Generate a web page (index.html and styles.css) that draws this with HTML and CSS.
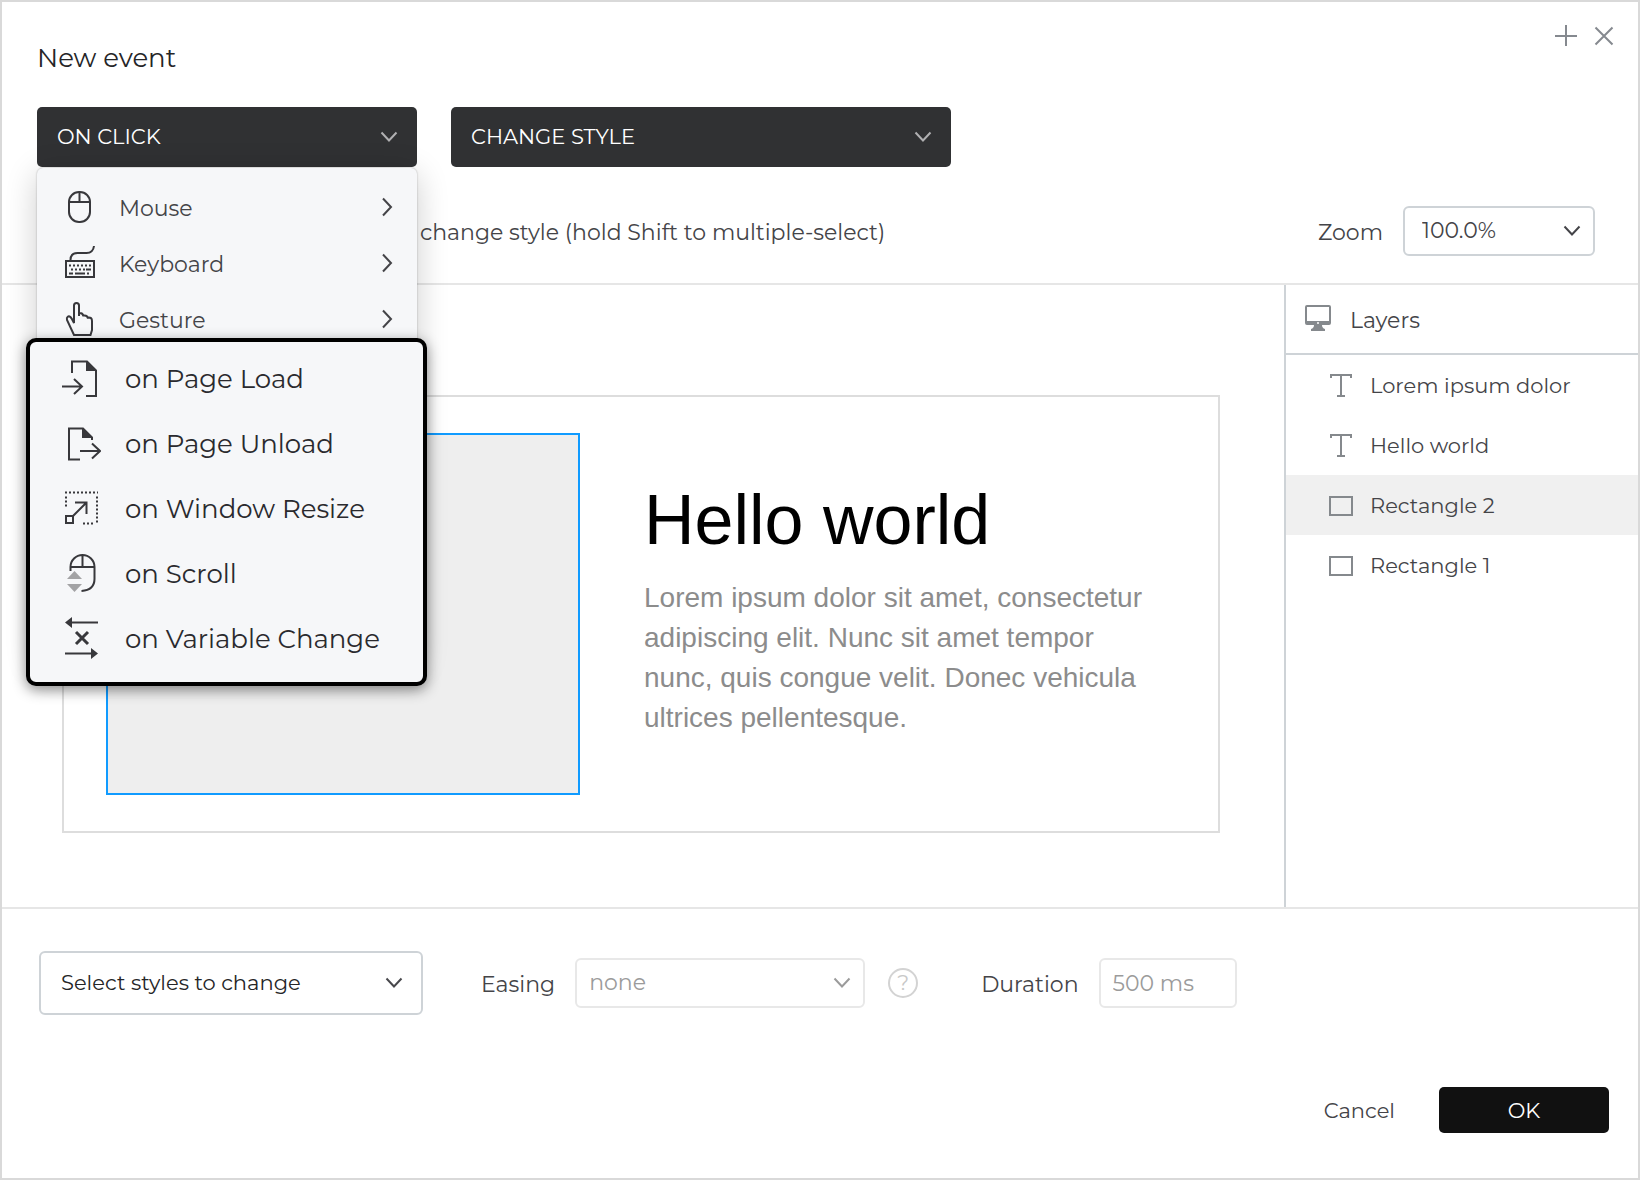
FILE: index.html
```html
<!DOCTYPE html>
<html lang="en">
<head>
<meta charset="utf-8">
<title>New event</title>
<link rel="stylesheet" href="styles.css">
</head>
<body>
<svg class="defs" aria-hidden="true">
  <symbol id="down" viewBox="0 0 18 12"><path d="M1.500 1.500 9 9.500l7.500-8"/></symbol>
  <symbol id="next" viewBox="0 0 12 20"><path d="m2 1.500 8 8.500-8 8.500"/></symbol>
  <symbol id="text" viewBox="0 0 26 26"><path d="M3 5V2h20v3M13 2v21M9 23h8"/></symbol>
  <symbol id="rect" viewBox="0 0 26 26"><path d="M2 4h22v18H2z"/></symbol>
</svg>
<main class="dialog">
  <header class="head">
    <h1 class="title">New event</h1>
    <div class="tools">
      <button class="tool" type="button" aria-label="Add event"><svg width="22" height="22" viewBox="0 0 22 22"><path d="M0 11h22M11 0v21"/></svg></button>
      <button class="tool" type="button" aria-label="Close"><svg width="22" height="22" viewBox="0 0 22 22"><path d="m2.500 2.500 17 17m0-17-17 17"/></svg></button>
    </div>
  </header>

  <div class="pickers">
    <div class="trigger">
      <button class="picker" type="button" aria-haspopup="menu" aria-expanded="true">ON CLICK</button>
      <svg class="arrow"><use href="#down"/></svg>
      <div class="menu">
        <ul class="groups">
          <li><button class="group" type="button">
            <svg class="icon" width="40" height="40" viewBox="0 0 40 40"><rect x="10" y="4" width="21" height="30" rx="10"/><path d="M10 14h21M20.500 4v10"/></svg>
            <span class="name">Mouse</span><svg class="next"><use href="#next"/></svg></button></li>
          <li><button class="group" type="button">
            <svg class="icon" width="40" height="40" viewBox="0 0 40 40"><path d="M11.500 16c0-5 3-7 7-7h9c5 0 7-3 7.500-7M7 17h28v16H7z"/><path d="M10 21.500h22M12 25.500h14" stroke-dasharray="2 2"/><path d="M27 25.500h5M10 29.500h4M16 29.500h10M28 29.500h2"/></svg>
            <span class="name">Keyboard</span><svg class="next"><use href="#next"/></svg></button></li>
          <li><button class="group" type="button">
            <svg class="icon" width="40" height="40" viewBox="0 0 40 40"><path d="M15 23V5.500a2.500 2.500 0 0 1 5 0V16v-3q4-.5 4.500 3.500v-1q4-.5 4.500 3v-1q4-.5 4 3.500v9l-1.500 5H15L8 20c-.8-3 1.500-4.500 3.500-3 1.500 1.500 2.500 4 3.500 6z"/></svg>
            <span class="name">Gesture</span><svg class="next"><use href="#next"/></svg></button></li>
        </ul>
        <ul class="events">
          <li><button class="event" type="button">
            <svg class="icon" width="42" height="44" viewBox="0 0 42 44"><path d="M13 16V4.500h15l9 9V39H27M3 29.500h20M15 22l8 7.500-8 7.500"/><path class="solid" d="M27 4l11 10H27z"/></svg>on Page Load</button></li>
          <li><button class="event" type="button">
            <svg class="icon" width="42" height="44" viewBox="0 0 42 44"><path d="M21 37.500H10v-31h14l9 9V18M21 29h20M33 21.500l8 7.500-8 7.500"/><path class="solid" d="M23 6l11 10H23z"/></svg>on Page Unload</button></li>
          <li><button class="event" type="button">
            <svg class="icon" width="42" height="44" viewBox="0 0 42 44"><path d="M6 5.500h33M7 9.500V20M38 9.500V37M34 36.500H22" stroke-dasharray="2 2"/><path d="M7 29h7v7H7zM14 29l13-13M16 15.500h11.500V27"/></svg>on Window Resize</button></li>
          <li><button class="event" type="button">
            <svg class="icon" width="42" height="44" viewBox="0 0 42 44"><path d="M11.500 19v-4a12 12 0 0 1 24 0v12q0 11-13 12M11.500 15h24M23.500 3v12"/><path class="wheel" d="M8 27l7.500-8 7.500 8zM8 32h15l-7.500 8z"/></svg>on Scroll</button></li>
          <li><button class="event" type="button">
            <svg class="icon" width="42" height="44" viewBox="0 0 42 44"><path d="M10 5.500h29M6 36.500h29"/><path d="m17 15 12 12m0-12L17 27" stroke-width="3"/><path class="solid" d="M6 5.500l7-5.500v11zM39 36.500L32 31v11z"/></svg>on Variable Change</button></li>
        </ul>
      </div>
    </div>
    <div class="action">
      <select class="picker" aria-label="Action"><option>CHANGE STYLE</option></select>
      <svg class="arrow"><use href="#down"/></svg>
    </div>
  </div>

  <div class="bar">
    <p class="hint">change style (hold Shift to multiple-select)</p>
    <label class="label" for="zoom">Zoom</label>
    <div class="field zoom">
      <select class="input" id="zoom"><option>100.0%</option></select>
      <svg class="arrow"><use href="#down"/></svg>
    </div>
  </div>

  <div class="work">
    <section class="canvas">
      <div class="artboard">
        <div class="shape"></div>
        <div class="copy">
          <h2 class="heading">Hello world</h2>
          <p class="para">Lorem ipsum dolor sit amet, consectetur adipiscing elit. Nunc sit amet tempor nunc, quis congue velit. Donec vehicula ultrices pellentesque.</p>
        </div>
      </div>
    </section>
    <aside class="layers">
      <h2 class="layers-head"><svg width="26" height="28" viewBox="0 0 26 28"><path class="fill" d="M2 0h22q2 0 2 2v16q0 2-2 2h-7q0 3 3 4v2H6v-2q3-1 3-4H2q-2 0-2-2V2q0-2 2-2z"/><path class="screen" d="M2 2h22v14H2z"/><circle class="screen" cx="13" cy="18" r="1"/></svg><span class="layers-title">Layers</span></h2>
      <ul class="layer-list">
        <li><button class="layer" type="button"><svg width="26" height="26"><use href="#text"/></svg>Lorem ipsum dolor</button></li>
        <li><button class="layer" type="button"><svg width="26" height="26"><use href="#text"/></svg>Hello world</button></li>
        <li><button class="layer current" type="button"><svg width="26" height="26"><use href="#rect"/></svg>Rectangle 2</button></li>
        <li><button class="layer" type="button"><svg width="26" height="26"><use href="#rect"/></svg>Rectangle 1</button></li>
      </ul>
    </aside>
  </div>

  <div class="options">
    <div class="field styles">
      <select class="input" aria-label="Styles"><option>Select styles to change</option></select>
      <svg class="arrow"><use href="#down"/></svg>
    </div>
    <div class="pair easing">
      <label class="label" for="easing">Easing</label>
      <div class="field">
        <select class="input" id="easing" disabled><option>none</option></select>
        <svg class="arrow"><use href="#down"/></svg>
      </div>
      <button class="help" type="button" aria-label="About easing">?</button>
    </div>
    <div class="pair duration">
      <label class="label" for="duration">Duration</label>
      <input class="input" id="duration" type="text" value="500 ms" disabled>
    </div>
  </div>

  <footer class="foot">
    <button class="cancel" type="button">Cancel</button>
    <button class="ok" type="button">OK</button>
  </footer>
</main>
</body>
</html>
```

FILE: styles.css
```css
* { box-sizing: border-box; }

body {
  margin: 0;
  font: 22px/28px Montserrat, Inter, sans-serif;
  color: #444448;
  background: #fff;
}

h1, h2, p, ul { margin: 0; padding: 0; font-weight: 400; }
ul { list-style: none; }
button, select, input { font: inherit; color: inherit; margin: 0; }
button { border: 0; padding: 0; background: none; text-align: left; }
select { appearance: none; }
svg { flex: none; fill: none; stroke: currentColor; stroke-width: 2; }
.defs { position: absolute; width: 0; height: 0; }

.dialog {
  display: flex;
  flex-direction: column;
  min-height: 100vh;
  border: 2px solid #d9d9d9;
}

/* Header */
.head {
  display: flex;
  justify-content: space-between;
  padding: 23px 23px 0 35px;
}
.title { padding-top: 15px; font-size: 26px; line-height: 36px; color: #252527; }
.tools { display: flex; gap: 16px; height: 22px; }
.tool { width: 22px; height: 22px; color: #85898f; }
.tool svg { display: block; }

.pickers { display: flex; gap: 34px; padding: 31px 35px 0; }
.trigger { position: relative; width: 380px; }
.action { position: relative; width: 500px; }
.picker {
  display: block;
  width: 100%;
  height: 60px;
  padding: 0 20px;
  border: 0;
  border-radius: 5px;
  background: #303133;
  color: #fff;
  font-size: 21px;
}
.arrow {
  position: absolute;
  right: 19px;
  top: calc(50% - 6px);
  width: 18px;
  height: 12px;
  pointer-events: none;
}
.pickers .arrow { color: #b0b0b2; }
.trigger > .arrow { top: 24px; }

/* Trigger menu */
.menu {
  position: absolute;
  z-index: 2;
  top: 61px;
  left: 0;
  width: 100%;
  padding-top: 12px;
  border-radius: 6px;
  background: #f6f7f9;
  box-shadow: 0 0 2px rgba(0, 0, 0, .3), 0 6px 32px rgba(0, 0, 0, .2);
}
.group {
  display: flex;
  align-items: center;
  gap: 20px;
  width: 100%;
  height: 56px;
  padding: 0 24px 0 22px;
}
.name { flex: 1; padding-top: 2px; }
.icon { color: #38383c; }
.next { width: 12px; height: 20px; margin-bottom: 2px; }
.events {
  position: relative;
  margin: -10px -10px -24px -11px;
  padding: 4px 0 11px;
  border: 4px solid #000;
  border-radius: 10px;
  background: #f6f7f9;
  box-shadow: 0 4px 14px rgba(0, 0, 0, .45);
}
.event {
  display: flex;
  align-items: center;
  gap: 24px;
  width: 100%;
  height: 65px;
  padding: 0 29px;
  font-size: 26px;
  color: #2a2a2e;
}
.solid { fill: currentColor; stroke: none; }
.wheel { fill: #a3a3a5; stroke: none; }

/* Hint and zoom */
.bar {
  display: flex;
  align-items: center;
  height: 118px;
  padding: 12px 43px 0 418px;
  border-bottom: 2px solid #e6e6e6;
}
.hint { flex: 1; }
.hint, .label, .layers-title { padding-top: 3px; }
.field { position: relative; }
.zoom { width: 192px; margin-left: 20px; }
.zoom .arrow { right: 14px; }
.input {
  display: block;
  width: 100%;
  height: 50px;
  padding: 0 17px;
  border: 2px solid #ced3d7;
  border-radius: 6px;
  background: #fff;
}
.input:disabled { padding: 0 12px; border-color: #e8e8e8; color: #9b9b9b; opacity: 1; }

/* Canvas and layers */
.work {
  display: grid;
  grid-template-columns: minmax(0, 1fr) 354px;
  flex: 1;
}
.canvas { padding: 110px 64px 74px 60px; }
.artboard {
  display: flex;
  gap: 64px;
  padding: 36px 42px;
  border: 2px solid #ddd;
}
.shape {
  flex: none;
  width: 474px;
  height: 362px;
  border: 2px solid #109bff;
  background: #eee;
}
.copy {
  max-width: 510px;
  padding-top: 47px;
  font-family: "Liberation Sans", Arial, sans-serif;
}
.heading { font-size: 70px; line-height: 80px; color: #000; }
.para { margin-top: 18px; font-size: 28px; line-height: 40px; color: #8c8c8c; }

.layers { border-left: 2px solid #ced3d7; }
.layers svg { color: #85898d; }
.layers-head {
  display: flex;
  align-items: center;
  gap: 19px;
  height: 70px;
  padding-left: 19px;
  border-bottom: 2px solid #ced3d7;
  font-size: 22px;
}
.fill { fill: #85898d; stroke: none; }
.screen { fill: #fff; stroke: none; }
.layer {
  display: flex;
  align-items: center;
  gap: 16px;
  width: 100%;
  height: 60px;
  padding: 2px 0 0 42px;
  font-size: 21px;
}
.current { background: #f0f0f0; }

/* Style options */
.options {
  display: flex;
  align-items: center;
  padding: 42px 37px 0;
  border-top: 2px solid #e6e6e6;
}
.styles { width: 384px; color: #252527; }
.styles .input { height: 64px; padding: 0 20px; font-size: 21px; }
.styles .arrow { right: 20px; color: #48484c; }
.pair { display: flex; align-items: center; }
.easing { margin-left: 58px; }
.easing .field { width: 290px; margin: 0 23px 0 20px; }
.easing .arrow { right: 14px; color: #9b9b9b; }
.help {
  width: 30px;
  height: 30px;
  border: 2px solid #d3d3d3;
  border-radius: 50%;
  color: #c8c8c8;
  font-size: 21px;
  line-height: 26px;
  text-align: center;
}
.duration { margin-left: 63px; }
.duration .input { width: 138px; margin-left: 20px; }

.foot {
  display: flex;
  align-items: center;
  justify-content: flex-end;
  gap: 44px;
  padding: 72px 29px 45px;
}
.cancel, .ok { padding-top: 2px; font-size: 21px; }
.ok {
  width: 170px;
  height: 46px;
  border-radius: 5px;
  background: #111;
  color: #fff;
  text-align: center;
}
```
